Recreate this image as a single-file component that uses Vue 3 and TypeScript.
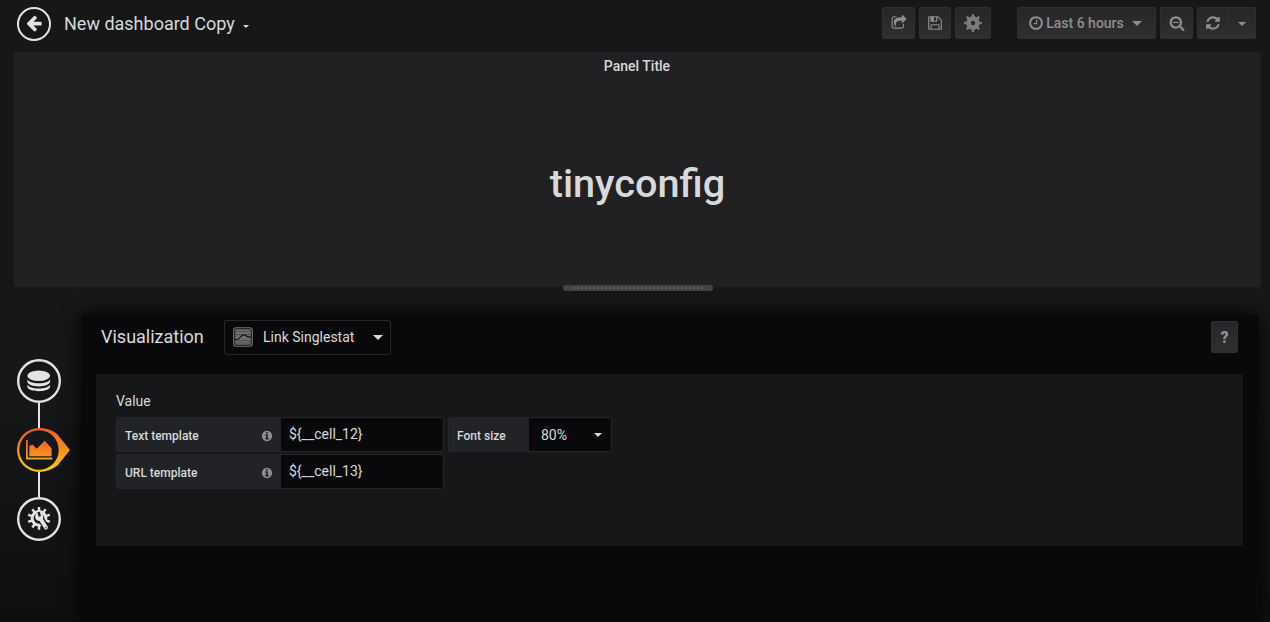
<script setup lang="ts">
import { ref } from 'vue'

interface TemplateField {
  label: string
  value: string
}

const fields = ref<TemplateField[]>([
  { label: 'Text template', value: '${__cell_12}' },
  { label: 'URL template', value: '${__cell_13}' },
])

// Toothed wheel outline centred on the origin.
function gear(teeth: number, outer: number, inner: number, tip: number, root: number): string {
  const step = (Math.PI * 2) / teeth
  const points: string[] = []
  for (let i = 0; i < teeth; i++) {
    const mid = i * step - Math.PI / 2
    const corners: [number, number][] = [
      [inner, -root],
      [outer, -tip],
      [outer, tip],
      [inner, root],
    ]
    for (const [radius, offset] of corners) {
      const angle = mid + offset * step
      points.push(`${(Math.cos(angle) * radius).toFixed(2)} ${(Math.sin(angle) * radius).toFixed(2)}`)
    }
  }
  return `M${points.join('L')}Z`
}

const cogPath = gear(8, 9, 6.8, 0.14, 0.25) + 'M0 -2.2A2.2 2.2 0 1 0 0 2.2A2.2 2.2 0 1 0 0 -2.2Z'
const settingsPath = gear(10, 11.4, 8.4, 0.18, 0.22) + 'M0 -5.4A5.4 5.4 0 1 0 0 5.4A5.4 5.4 0 1 0 0 -5.4Z'

const icons = {
  back: 'M1664 896v128q0 53-32.5 90.5t-84.5 37.5h-704l293 294q38 36 38 90t-38 90l-75 76q-37 37-90 37-52 0-91-37l-651-652q-37-37-37-90 0-52 37-91l651-650q38-38 91-38 52 0 90 38l75 74q38 38 38 91t-38 91l-293 293h704q52 0 84.5 37.5t32.5 90.5z',
  share: 'M1472 989v259q0 119-84.5 203.5t-203.5 84.5h-832q-119 0-203.5-84.5t-84.5-203.5v-832q0-119 84.5-203.5t203.5-84.5h255q13 0 22.5 9.5t9.5 22.5q0 27-26 32-77 26-133 60-10 4-16 4h-112q-66 0-113 47t-47 113v832q0 66 47 113t113 47h832q66 0 113-47t47-113v-214q0-19 18-29 28-13 54-37 16-16 35-8 21 9 21 29zm237-496l-384 384q-18 19-45 19-12 0-25-5-39-17-39-59v-192h-160q-323 0-438 131-119 137-74 473 3 23-20 34-8 2-12 2-16 0-26-13-10-14-21-31t-39.5-68.5-49.5-99.5-38.5-114-17.5-122q0-49 3.5-91t14-90 28-88 47-81.5 68.5-74 94.5-61.5 124.5-48.5 159.5-30.5 196.5-11h160v-192q0-42 39-59 13-5 25-5 26 0 45 19l384 384q19 19 19 45t-19 45z',
  save: 'M512 1536h768v-384h-768v384zm896 0h128v-896q0-14-10-38.5t-20-34.5l-281-281q-10-10-34-20t-39-10v416q0 40-28 68t-68 28h-576q-40 0-68-28t-28-68v-416h-128v1280h128v-416q0-40 28-68t68-28h832q40 0 68 28t28 68v416zm-384-928v-320q0-13-9.5-22.5t-22.5-9.5h-192q-13 0-22.5 9.5t-9.5 22.5v320q0 13 9.5 22.5t22.5 9.5h192q13 0 22.5-9.5t9.5-22.5zm640 32v928q0 40-28 68t-68 28h-1344q-40 0-68-28t-28-68v-1344q0-40 28-68t68-28h928q40 0 88 20t76 48l280 280q28 28 48 76t20 88z',
  clock: 'M1024 544v448q0 14-9 23t-23 9h-320q-14 0-23-9t-9-23v-64q0-14 9-23t23-9h224v-352q0-14 9-23t23-9h64q14 0 23 9t9 23zm416 352q0-148-73-273t-198-198-273-73-273 73-198 198-73 273 73 273 198 198 273 73 273-73 198-198 73-273zm224 0q0 209-103 385.5t-279.5 279.5-385.5 103-385.5-103-279.5-279.5-103-385.5 103-385.5 279.5-279.5 385.5-103 385.5 103 279.5 279.5 103 385.5z',
  zoomOut: 'M1088 800v64q0 13-9.5 22.5t-22.5 9.5h-576q-13 0-22.5-9.5t-9.5-22.5v-64q0-13 9.5-22.5t22.5-9.5h576q13 0 22.5 9.5t9.5 22.5zm128 32q0-185-131.5-316.5t-316.5-131.5-316.5 131.5-131.5 316.5 131.5 316.5 316.5 131.5 316.5-131.5 131.5-316.5zm512 832q0 53-37.5 90.5t-90.5 37.5q-54 0-90-38l-343-342q-179 124-399 124-143 0-273.5-55.5t-225-150-150-225-55.5-273.5 55.5-273.5 150-225 225-150 273.5-55.5 273.5 55.5 225 150 150 225 55.5 273.5q0 220-124 399l343 343q37 37 37 90z',
  refresh: 'M1639 1056q0 5-1 7-64 268-268 434.5t-478 166.5q-146 0-282.5-55t-243.5-157l-129 129q-19 19-45 19t-45-19-19-45v-448q0-26 19-45t45-19h448q26 0 45 19t19 45-19 45l-137 137q71 66 161 102t187 36q134 0 250-65t186-179q11-17 53-117 8-23 30-23h192q13 0 22.5 9.5t9.5 22.5zm25-800v448q0 26-19 45t-45 19h-448q-26 0-45-19t-19-45 19-45l138-138q-148-137-349-137-134 0-250 65t-186 179q-11 17-53 117-8 23-30 23h-199q-13 0-22.5-9.5t-9.5-22.5v-7q65-268 270-434.5t480-166.5q146 0 284 55.5t245 156.5l130-129q19-19 45-19t45 19 19 45z',
  info: 'M1152 1376v-160q0-14-9-23t-23-9h-96v-512q0-14-9-23t-23-9h-320q-14 0-23 9t-9 23v160q0 14 9 23t23 9h96v320h-96q-14 0-23 9t-9 23v160q0 14 9 23t23 9h448q14 0 23-9t9-23zm-128-896v-160q0-14-9-23t-23-9h-192q-14 0-23 9t-9 23v160q0 14 9 23t23 9h192q14 0 23-9t9-23zm640 416q0 209-103 385.5t-279.5 279.5-385.5 103-385.5-103-279.5-279.5-103-385.5 103-385.5 279.5-279.5 385.5-103 385.5 103 279.5 279.5 103 385.5z',
}
</script>

<template>
  <div class="app">
    <header class="navbar">
      <button class="back" aria-label="Back">
        <svg width="18" height="18" viewBox="0 0 1792 1792"><path :d="icons.back" /></svg>
      </button>
      <h1 class="title">New dashboard Copy</h1>
      <i class="caret title-caret"></i>
      <nav class="tools">
        <button class="btn share"><svg width="16" height="16" viewBox="0 0 1792 1792"><path :d="icons.share" /></svg></button>
        <button class="btn save"><svg width="16" height="16" viewBox="0 0 1792 1792"><path :d="icons.save" /></svg></button>
        <button class="btn cog"><svg width="18" height="18" viewBox="-9 -9 18 18"><path :d="cogPath" fill-rule="evenodd" /></svg></button>
        <button class="btn time">
          <svg width="16" height="16" viewBox="0 0 1792 1792"><path :d="icons.clock" /></svg>
          <span>Last 6 hours</span>
          <i class="caret"></i>
        </button>
        <button class="btn zoom"><svg width="16" height="16" viewBox="0 0 1792 1792"><path :d="icons.zoomOut" /></svg></button>
        <div class="split">
          <button class="btn refresh"><svg width="16" height="16" viewBox="0 0 1792 1792"><path :d="icons.refresh" /></svg></button>
          <button class="btn interval"><i class="caret"></i></button>
        </div>
      </nav>
    </header>

    <section class="panel">
      <h2 class="panel-title">Panel Title</h2>
      <div class="stat">tinyconfig</div>
      <div class="handle"><i class="dots"></i></div>
    </section>

    <main class="editor">
      <aside class="tabs">
        <svg class="tab" width="54" height="44" viewBox="0 0 54 44">
          <circle cx="22" cy="22" r="20.8" class="ring" />
          <g class="glyph">
            <ellipse cx="21.7" cy="16.8" rx="11.4" ry="5.2" />
            <path d="M10.3 20.3C12.5 25.6 30.9 25.6 33.1 20.3V22.800C32 29 11.4 29 10.3 22.800Z" />
            <path d="M10.3 25.400C12.5 30.700 30.900 30.700 33.100 25.400V27.700C32 33.600 11.400 33.600 10.300 27.700Z" />
          </g>
        </svg>
        <i class="link"></i>
        <svg class="tab" width="54" height="44" viewBox="0 0 54 44">
          <defs>
            <linearGradient id="flame" gradientUnits="userSpaceOnUse" x1="0" y1="0" x2="0" y2="44">
              <stop offset="0" stop-color="#f05a28" />
              <stop offset="1" stop-color="#fbca0a" />
            </linearGradient>
            <linearGradient id="chart" gradientUnits="userSpaceOnUse" x1="0" y1="12" x2="0" y2="32">
              <stop offset="0" stop-color="#f15f27" />
              <stop offset="1" stop-color="#f7a31a" />
            </linearGradient>
          </defs>
          <path fill="url(#flame)" d="M22 0C30 0 36 2.500 40.500 6.500L53 22L40.500 37.500Q32 44 22 44A22 22 0 0 1 22 0Z" />
          <circle cx="22" cy="22" r="19.7" class="well" />
          <path fill="url(#chart)" d="M9 12H10.800V29.400H35.300V31.500H9ZM12.300 28.200V18L15.500 16.500L19.700 20.800L27.700 12.700L34.600 20.200V28.200Z" />
        </svg>
        <i class="link"></i>
        <svg class="tab" width="54" height="44" viewBox="0 0 54 44">
          <circle cx="22" cy="22" r="20.8" class="ring" />
          <path class="glyph" transform="translate(22 21.300)" :d="settingsPath" fill-rule="evenodd" />
          <path class="wrench-edge" d="M23 21L29.600 31" />
          <circle class="glyph" cx="22.300" cy="19.800" r="4.100" />
          <path class="wrench" d="M22.600 20.300L29 30.600" />
          <path class="wrench-notch" d="M22.800 19.400L21.600 15" />
          <circle class="well" cx="29" cy="30.700" r=".7" />
        </svg>
      </aside>

      <section class="workspace">
        <div class="toolbar">
          <h3 class="heading">Visualization</h3>
          <div class="picker">
            <svg width="20" height="20" viewBox="0 0 20 20">
              <rect x=".7" y=".7" width="18.6" height="18.6" rx="2.5" fill="#121214" stroke="#777" stroke-width="1.1" />
              <rect x="2.2" y="2.2" width="15.6" height="15.6" rx="1.2" fill="#6e6e6e" />
              <path d="M2 4.5H18M2 7.5H18M2 13.5H18M2 16H18" stroke="#4b4b4b" stroke-width=".8" />
              <path d="M1.500 12.500H4Q6 12.500 7.500 10Q10 6.500 12.500 8.500T18 10" fill="none" stroke="#111" stroke-width="1.2" />
            </svg>
            <span>Link Singlestat</span>
            <i class="caret"></i>
          </div>
          <button class="btn help">?</button>
        </div>

        <div class="options">
          <h4 class="group-title">Value</h4>
          <div class="columns">
            <div class="stack">
              <div v-for="field in fields" :key="field.label" class="field">
                <label class="label">
                  {{ field.label }}
                  <svg width="12" height="12" viewBox="0 0 1792 1792"><path :d="icons.info" /></svg>
                </label>
                <input v-model="field.value" class="input" type="text" />
              </div>
            </div>
            <div class="field">
              <label class="label short">Font size</label>
              <div class="select">80%<i class="caret"></i></div>
            </div>
          </div>
        </div>
      </section>
    </main>
  </div>
</template>

<style>
html,
body {
  background: #161719;
  overflow: hidden;
}
</style>

<style scoped>
* {
  box-sizing: border-box;
}
.app {
  height: 622px;
  display: flex;
  flex-direction: column;
  overflow: hidden;
  background: #161719;
  color: #d8d9da;
  font-family: Roboto, sans-serif;
  font-size: 14px;
}
h1, h2, h3, h4 {
  margin: 0;
  font-weight: 400;
}
button {
  font: inherit;
  padding: 0;
}
svg {
  display: block;
  flex: none;
  fill: currentColor;
}
.caret {
  display: block;
  width: 0;
  border: 4px solid transparent;
  border-top-color: currentColor;
  border-bottom: 0;
}
.navbar {
  height: 52px;
  flex: none;
  display: flex;
  padding: 7px 14px 0 17px;
}
.back {
  width: 34px;
  height: 34px;
  border: 2px solid #e3e3e3;
  border-radius: 50%;
  background: transparent;
  color: #e3e3e3;
  display: flex;
  align-items: center;
  justify-content: center;
  padding-bottom: 2px;
}
.title {
  margin-left: 13px;
  font-size: 18px;
  line-height: 34px;
}
.title-caret {
  margin: 18px 0 0 8px;
  border-width: 3px;
  border-bottom: 0;
}
.tools {
  margin-left: auto;
  display: flex;
}
.btn {
  height: 32px;
  border: 1px solid #2f2f32;
  border-radius: 2px;
  background: linear-gradient(#262628, #303032);
  color: #8e8e8e;
  display: flex;
  align-items: center;
  justify-content: center;
  font-weight: 500;
}
.share { width: 33px; }
.save { width: 32px; margin-left: 4px; }
.cog { width: 36px; margin-left: 4px; color: #7b7b7b; }
.time { width: 139px; margin-left: 26px; padding-right: 3px; }
.time span { margin: 0 8px 0 2px; }
.time .caret { border-width: 5px; border-bottom: 0; }
.zoom { width: 33px; margin-left: 4px; }
.split { display: flex; margin-left: 4px; }
.refresh { width: 32px; border-radius: 2px 0 0 2px; }
.interval { width: 27px; border-left: 0; border-radius: 0 2px 2px 0; padding-top: 1px; }
.panel {
  position: relative;
  height: 235px;
  flex: none;
  margin: 0 9px 0 14px;
  border-radius: 3px;
  background: #212124;
  text-align: center;
}
.panel-title {
  font-size: 14px;
  font-weight: 500;
  line-height: 28px;
  padding-right: 1px;
}
.stat {
  margin-top: 80px;
  font-size: 39.7px;
  line-height: 48px;
  font-weight: 500;
}
.handle {
  position: absolute;
  left: 549px;
  bottom: -4px;
  width: 150px;
  height: 6px;
  border-radius: 3px;
  background: #424345;
  padding: 2px 9px 0 10px;
}
.dots {
  display: block;
  height: 2px;
  background: repeating-linear-gradient(90deg, #5d5e60 0 2px, transparent 2px 4px);
}
.editor {
  flex: 1;
  display: flex;
  padding: 28px 12px 0 17px;
  background: linear-gradient(#161719 30%, #0e0f10);
}
.tabs {
  width: 64px;
  flex: none;
  padding-top: 44px;
  position: relative;
  z-index: 1;
}
.link {
  display: block;
  width: 2px;
  height: 25px;
  margin-left: 21px;
  background: #e3e3e3;
}
.ring {
  fill: #161719;
  stroke: #e3e3e3;
  stroke-width: 2.4;
}
.well { fill: #161719; }
.glyph { fill: #e3e3e3; }
.wrench-edge { stroke: #161719; stroke-width: 6.6; stroke-linecap: round; }
.wrench { stroke: #e3e3e3; stroke-width: 3.9; stroke-linecap: round; }
.wrench-notch { stroke: #161719; stroke-width: 2.4; }
.workspace {
  flex: 1;
  border-radius: 3px 3px 0 0;
  background: #09090b;
  box-shadow: 0 0 20px #000;
  padding: 5px 15px 0;
}
.toolbar {
  height: 54px;
  display: flex;
  padding: 0 5px;
}
.heading {
  font-size: 18px;
  line-height: 34px;
  width: 123px;
}
.picker {
  width: 167px;
  height: 35px;
  border: 1px solid #262628;
  border-radius: 2px;
  display: flex;
  align-items: center;
  padding: 0 7px 1px 8px;
}
.picker span { margin-left: 10px; }
.picker .caret, .select .caret { margin-left: auto; }
.picker .caret { border-width: 5px; border-bottom: 0; }
.help {
  width: 27px;
  margin: 1px 0 0 auto;
  font-size: 16px;
  font-weight: 900;
}
.options {
  height: 172px;
  border-radius: 3px;
  background: #161719;
  padding: 17px 20px 0;
}
.group-title {
  line-height: 20px;
  margin-bottom: 6px;
}
.columns {
  display: flex;
  align-items: flex-start;
  gap: 4px;
}
.stack {
  display: flex;
  flex-direction: column;
  gap: 2px;
}
.field {
  display: flex;
  height: 35px;
}
.label {
  width: 165px;
  padding: 2px 8px 0;
  border: 1px solid #262628;
  border-right: 0;
  border-radius: 3px 0 0 3px;
  background: #212327;
  font-size: 12px;
  font-weight: 500;
  display: flex;
  align-items: center;
  justify-content: space-between;
}
.label svg { color: #8e8e8e; }
.label.short { width: 81px; }
.input {
  width: 163px;
  border: 1px solid #262628;
  border-left: 0;
  border-radius: 0 3px 3px 0;
  background: #09090b;
  color: inherit;
  font: inherit;
  padding: 0 7px 1px 8px;
}
.select {
  width: 83px;
  border: 1px solid #262628;
  border-left: 0;
  border-radius: 0 3px 3px 0;
  background: #09090b;
  display: flex;
  align-items: center;
  padding: 0 9px 0 12px;
}
.select .caret { margin-top: 1px; }
</style>
